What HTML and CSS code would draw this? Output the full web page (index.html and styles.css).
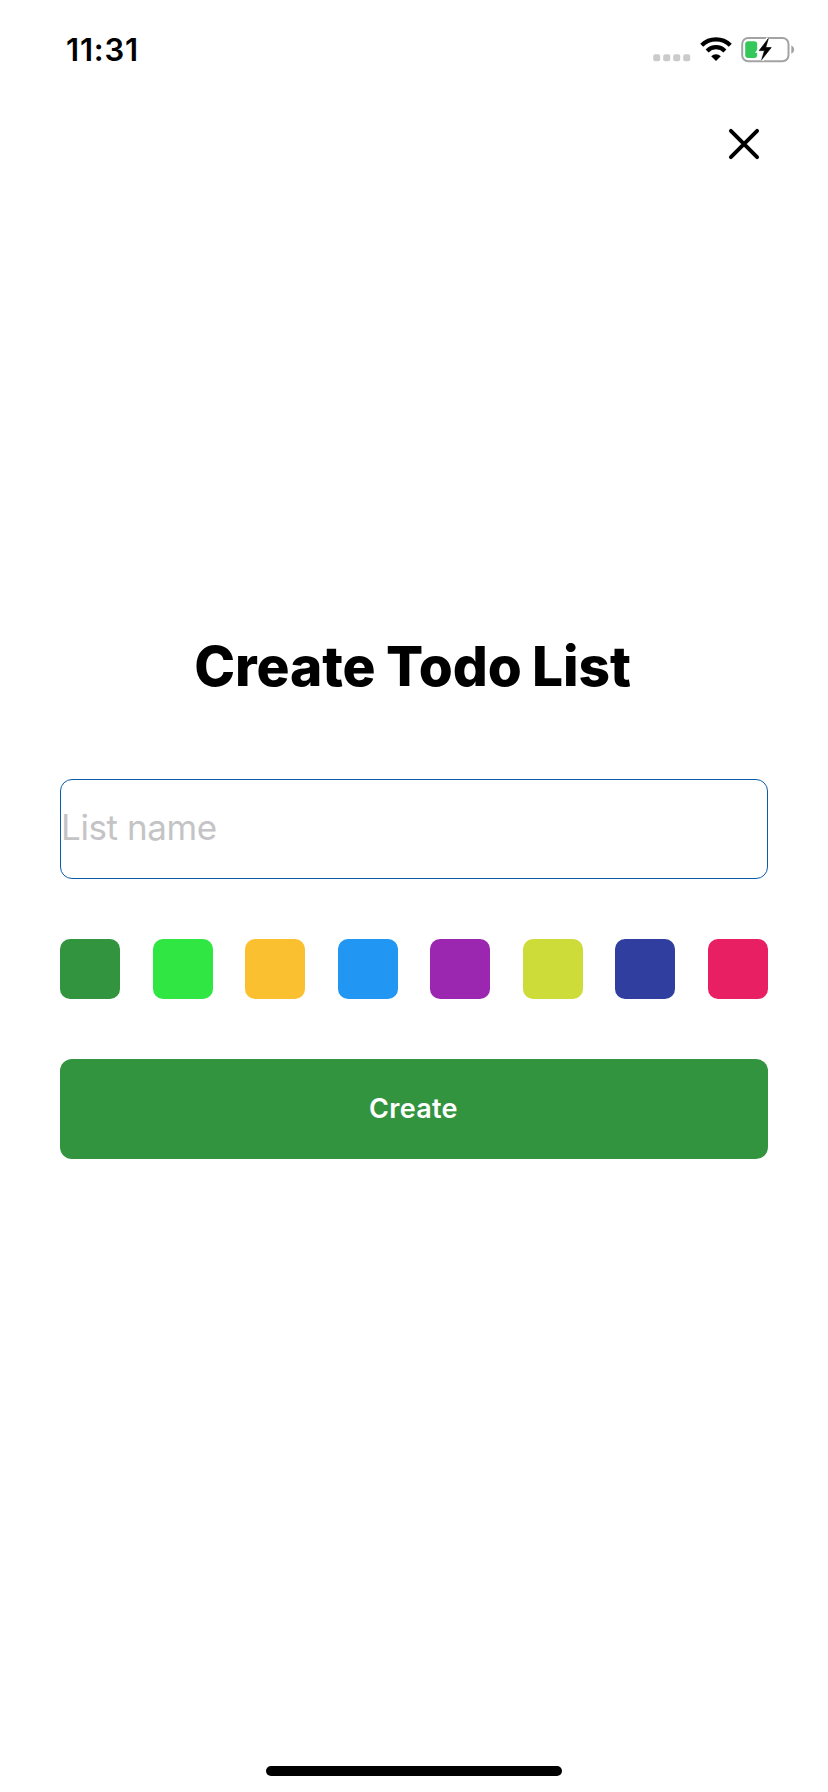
FILE: index.html
```html
<!DOCTYPE html>
<html lang="en">
<head>
<meta charset="utf-8">
<title>Create Todo List</title>
<link rel="stylesheet" href="styles.css">
</head>
<body>
<div class="screen">
  <header class="status">
    <span class="time">11:31</span>
    <span class="indicators">
      <svg class="cell" width="38" height="8" viewBox="0 0 38 8" fill="#cbcbcb"><rect x="0.2" y="0.2" width="7" height="7" rx="2"/><rect x="10.2" y="0.2" width="7" height="7" rx="2"/><rect x="20.2" y="0.2" width="7" height="7" rx="2"/><rect x="30.2" y="0.2" width="7" height="7" rx="2"/></svg>
      <svg class="wifi" width="32" height="25" viewBox="0 0 32 25"><g fill="none" stroke="#000" stroke-width="4.2"><path d="M1.7 8.2A20.4 20.4 0 0 1 30.3 8.2"/><path d="M7.1 13.9A12.6 12.6 0 0 1 24.9 13.9"/></g><path d="M11.2 19.2a6.8 6.8 0 0 1 9.6 0L16 24z"/></svg>
      <svg class="battery" width="54" height="30" viewBox="0 0 54 30"><rect x="1.2" y="3" width="46.3" height="23.2" rx="6" fill="none" stroke="#a3a3a3" stroke-width="2"/><path d="M50.3 10.4c3.8 1.3 3.8 7 0 8.3z" fill="#a3a3a3"/><rect x="4.2" y="6.2" width="12" height="16.8" rx="3" fill="#34c759"/><path d="M27.3 3.6L18.2 15.6H23.5L20.7 24.6L30.2 12.6H24.7z" stroke="#fff" stroke-width="4.2" fill="#fff"/><path d="M27.3 3.6L18.2 15.6H23.5L20.7 24.6L30.2 12.6H24.7z" stroke="#000" stroke-width="0.7" stroke-linejoin="round"/></svg>
    </span>
  </header>
  <nav class="toolbar">
    <button class="close" aria-label="Close"><svg width="32" height="32" viewBox="0 0 32 32"><path d="M2.9 2.9L29.1 29.1M29.1 2.9L2.9 29.1" stroke="#000" stroke-width="3.9" stroke-linecap="round"/></svg></button>
  </nav>
  <main class="form">
    <h1 class="title">Create Todo List</h1>
    <input class="name" type="text" placeholder="List name" aria-label="List name">
    <div class="colors">
      <span class="swatch green"></span><span class="swatch lime"></span><span class="swatch amber"></span><span class="swatch blue"></span><span class="swatch purple"></span><span class="swatch yellow"></span><span class="swatch indigo"></span><span class="swatch pink"></span>
    </div>
    <button class="create">Create</button>
  </main>
  <div class="home"></div>
</div>
</body>
</html>
```
FILE: styles.css
```css
* { box-sizing: border-box; }
body { margin: 0; background: #fff; color: #000; font-family: Inter, "Liberation Sans", sans-serif; }
svg { display: block; }
button { border: 0; padding: 0; font: inherit; background: none; }
.screen { display: flex; flex-direction: column; height: 1792px; overflow: hidden; }
.status { display: flex; justify-content: space-between; height: 96px; padding: 30px 33px 0 66px; }
.time { font-size: 31px; line-height: 40px; font-weight: 600; letter-spacing: 0.8px; }
.indicators { display: flex; align-items: flex-start; }
.cell { margin: 24px 9px 0 0; }
.wifi { margin: 7px 9px 0 0; }
.battery { margin-top: 5px; }
.toolbar { display: flex; justify-content: flex-end; padding: 32px 68px 0 0; height: 96px; }
.close { width: 32px; height: 32px; }
.form { display: flex; flex-direction: column; padding: 440px 60px 0; }
.title { margin: 0 0 79px; padding-right: 3px; height: 68px; line-height: 68px; font-size: 55px; font-weight: 800; text-align: center; letter-spacing: -0.1px; word-spacing: -1.5px; }
.name { height: 100px; width: 100%; padding: 0 0 4px; border: 1px solid #0c5ba8; border-radius: 12px; outline: 0; background: #fff; font: 400 35px Inter, "Liberation Sans", sans-serif; letter-spacing: -0.4px; }
.name::placeholder { color: #c4c4c6; opacity: 1; }
.colors { display: flex; justify-content: space-between; margin: 60px 0; }
.swatch { width: 60px; height: 60px; border-radius: 10px; }
.green { background: #33943f; }
.lime { background: #2fe643; }
.amber { background: #fbc02f; }
.blue { background: #2296f3; }
.purple { background: #9b27b0; }
.yellow { background: #cddc39; }
.indigo { background: #303f9f; }
.pink { background: #e91f63; }
.create { height: 100px; padding: 0 1px 1px 0; border-radius: 12px; background: #33943f; color: #fff; font-size: 27px; font-weight: 600; letter-spacing: 0.3px; }
.home { width: 296px; height: 10px; margin: auto auto 16px; border-radius: 5px; background: #000; }
```
